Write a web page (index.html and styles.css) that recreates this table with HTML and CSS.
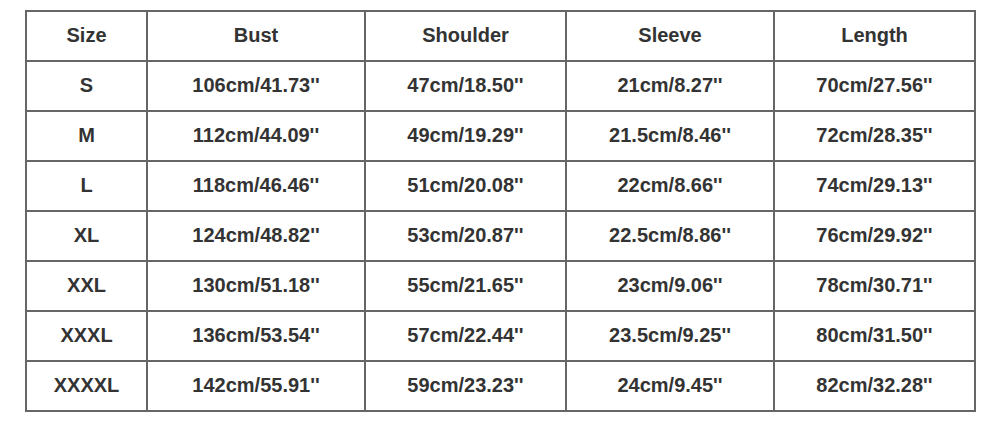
FILE: index.html
```html
<!DOCTYPE html>
<html>
<head>
<meta charset="utf-8">
<link rel="stylesheet" href="styles.css">
</head>
<body>
<table class="size-table">
  <colgroup>
    <col class="c1"><col class="c2"><col class="c3"><col class="c4"><col class="c5">
  </colgroup>
  <tr><td>Size</td><td>Bust</td><td>Shoulder</td><td>Sleeve</td><td>Length</td></tr>
  <tr><td>S</td><td>106cm/41.73''</td><td>47cm/18.50''</td><td>21cm/8.27''</td><td>70cm/27.56''</td></tr>
  <tr><td>M</td><td>112cm/44.09''</td><td>49cm/19.29''</td><td>21.5cm/8.46''</td><td>72cm/28.35''</td></tr>
  <tr><td>L</td><td>118cm/46.46''</td><td>51cm/20.08''</td><td>22cm/8.66''</td><td>74cm/29.13''</td></tr>
  <tr><td>XL</td><td>124cm/48.82''</td><td>53cm/20.87''</td><td>22.5cm/8.86''</td><td>76cm/29.92''</td></tr>
  <tr><td>XXL</td><td>130cm/51.18''</td><td>55cm/21.65''</td><td>23cm/9.06''</td><td>78cm/30.71''</td></tr>
  <tr><td>XXXL</td><td>136cm/53.54''</td><td>57cm/22.44''</td><td>23.5cm/9.25''</td><td>80cm/31.50''</td></tr>
  <tr><td>XXXXL</td><td>142cm/55.91''</td><td>59cm/23.23''</td><td>24cm/9.45''</td><td>82cm/32.28''</td></tr>
</table>
</body>
</html>
```
FILE: styles.css
```css
html, body {
  margin: 0;
  padding: 0;
  background: #ffffff;
}
body {
  padding: 10px 0 0 25px;
}
.size-table {
  border-collapse: collapse;
  table-layout: fixed;
  width: 949px;
  font-family: "Liberation Sans", Arial, sans-serif;
  font-weight: bold;
  font-size: 20px;
  color: #333333;
}
.c1 { width: 121px; }
.c2 { width: 218px; }
.c3 { width: 201px; }
.c4 { width: 208px; }
.c5 { width: 201px; }
.size-table td {
  border: 2px solid #666666;
  height: 46px;
  padding: 0 0 2px 0;
  text-align: center;
  vertical-align: middle;
  line-height: 20px;
}
```
